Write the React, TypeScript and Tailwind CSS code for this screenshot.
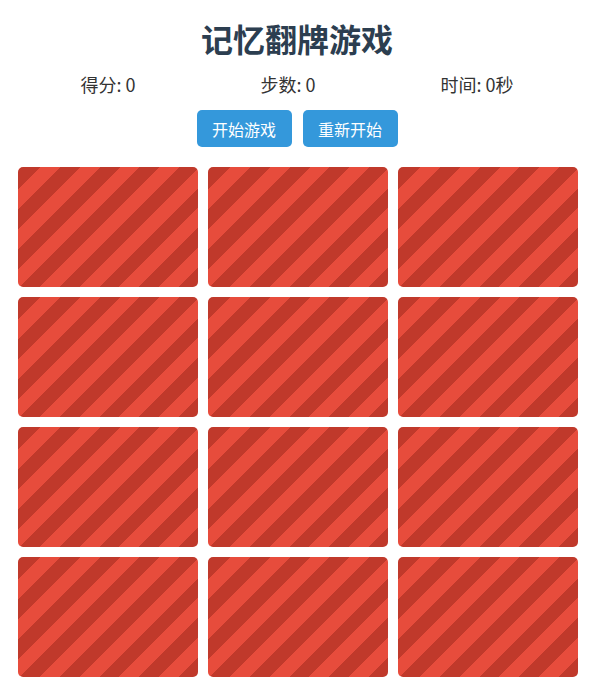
import React from "react";

const FONT = "font-['Microsoft_YaHei','Noto_Sans_CJK_SC','Noto_Sans',sans-serif]";

export default function App() {
  const cards = Array.from({ length: 12 });
  return (
    <div className={`${FONT} min-h-[695px] bg-white pt-[18px]`}>
      <h1 className="text-center text-[32px] font-bold leading-[40px] text-[#2c3e50]">
        记忆翻牌游戏
      </h1>

      <div className="mx-[18px] mt-[14px] flex justify-around text-[18px] leading-[24px] text-[#333]">
        <span>得分: 0</span>
        <span>步数: 0</span>
        <span>时间: 0秒</span>
      </div>

      <div className="mt-[14px] flex justify-center gap-[11px]">
        <button className="h-[37px] w-[95px] rounded-[5px] bg-[#3498db] text-[16px] text-white">
          开始游戏
        </button>
        <button className="h-[37px] w-[95px] rounded-[5px] bg-[#3498db] text-[16px] text-white">
          重新开始
        </button>
      </div>

      <div className="ml-[18px] mt-[20px] grid w-[560px] grid-cols-3 gap-[10px]">
        {cards.map((_, i) => (
          <div
            key={i}
            className="h-[120px] rounded-[5px] bg-[repeating-linear-gradient(-45deg,#c0392b,#c0392b_14px,#e74c3c_14px,#e74c3c_28px)]"
          />
        ))}
      </div>
    </div>
  );
}
